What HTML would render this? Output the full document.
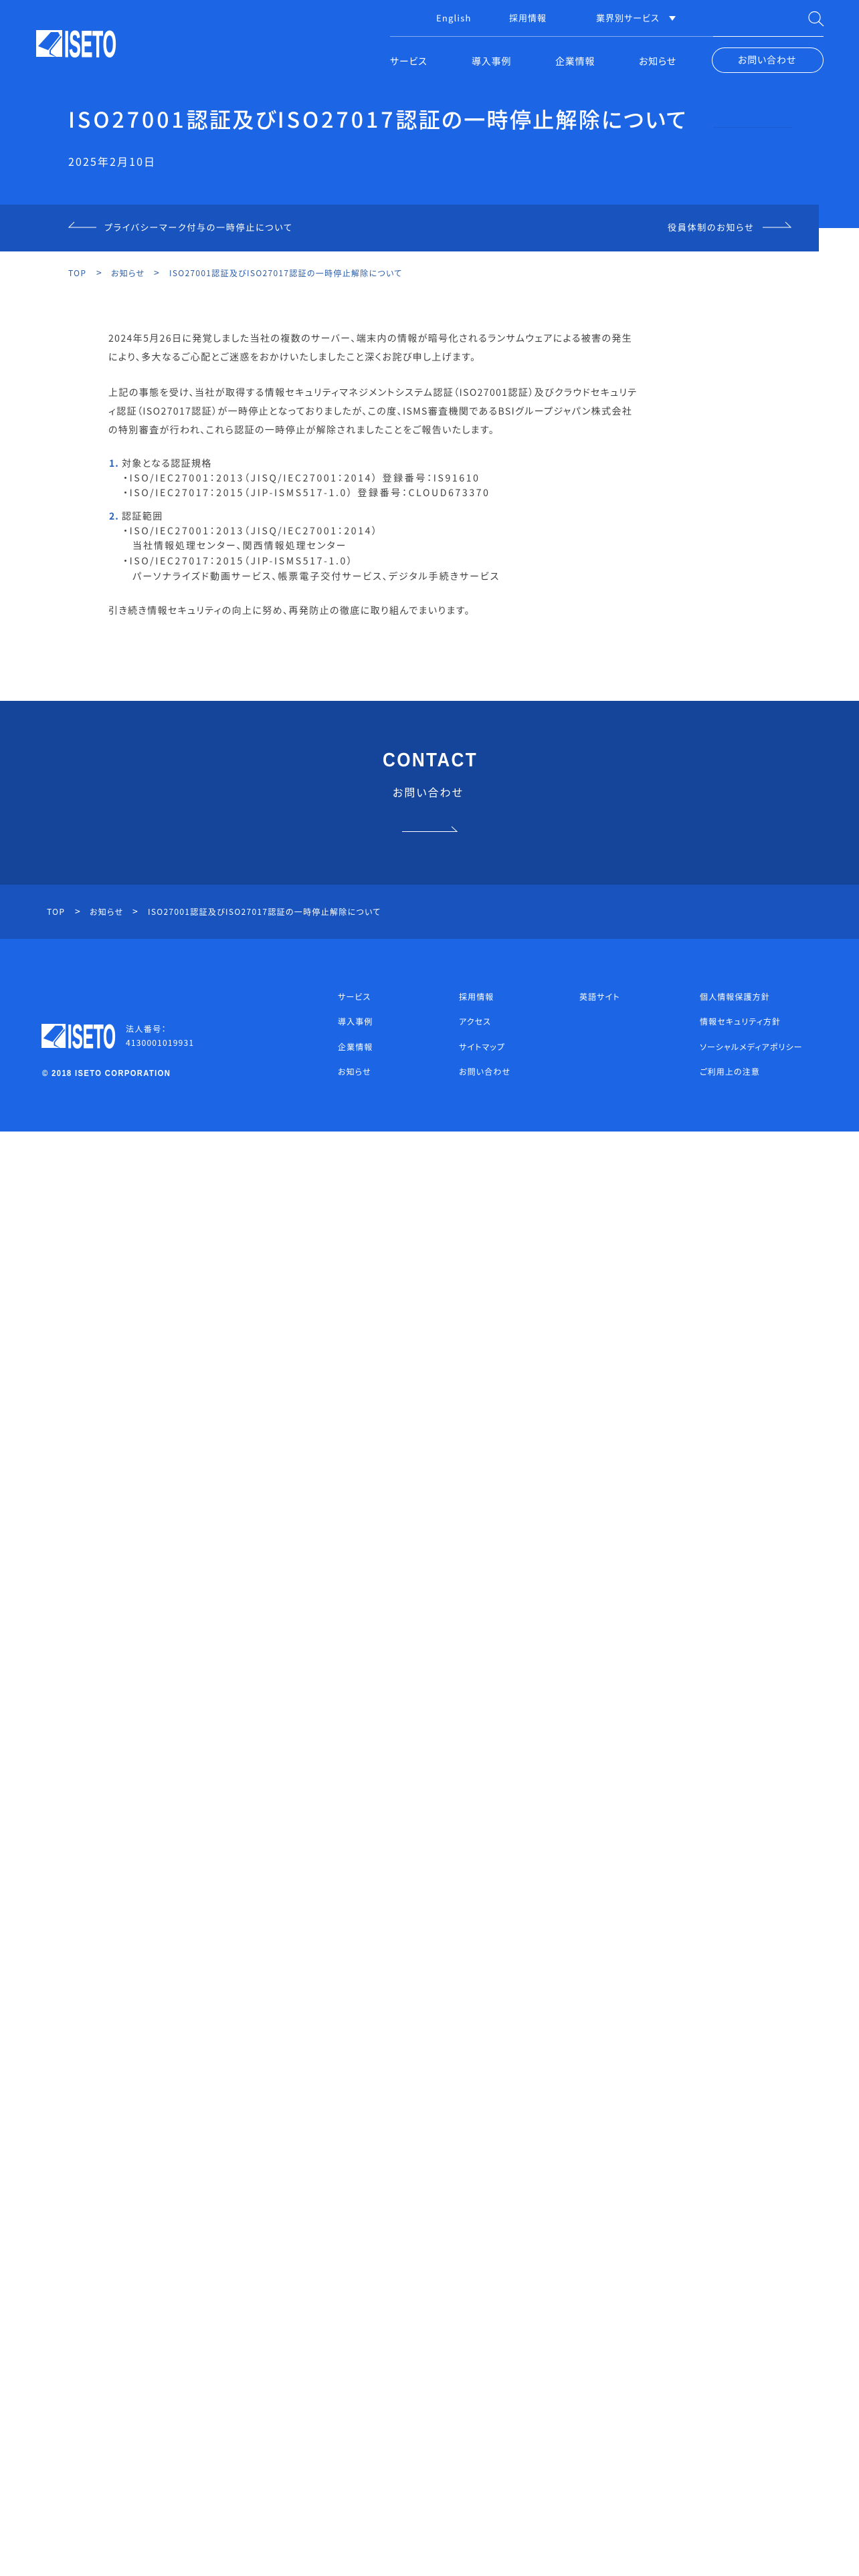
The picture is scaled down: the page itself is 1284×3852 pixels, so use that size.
<!DOCTYPE html>
<html lang="ja">
<head>
<meta charset="utf-8">
<title>ISO27001認証及びISO27017認証の一時停止解除について</title>
<style>
*{margin:0;padding:0;box-sizing:border-box}
html,body{width:1284px;height:3852px;background:#fff;overflow:hidden}
body{position:relative;font-family:"Noto Sans CJK JP","Liberation Sans",sans-serif;font-feature-settings:"palt";color:#fff}
.b{position:absolute}
.t{position:absolute;white-space:nowrap;line-height:20px;height:20px;text-decoration:none;color:inherit}
.n14{font-size:14px;letter-spacing:.8px}
.n13{font-size:13px;letter-spacing:1px}
.l13{font-size:13px;letter-spacing:1.75px}
.bc{font-size:12px;letter-spacing:1.3px}
.gt{font-size:14px;letter-spacing:0}
.f{font-size:12px;letter-spacing:1.1px}
.c{font-size:14px;letter-spacing:1.4px;color:#3f3f3f}
.s{letter-spacing:2.65px}
.m{letter-spacing:2px}
.num{font-size:14px;font-weight:700;letter-spacing:1px;color:#2a63b8}
h1 span{letter-spacing:4px}
svg{position:absolute;overflow:visible}
</style>
</head>
<body>
<header>
<div class="b" style="left:0;top:0;width:1284px;height:341px;background:#1c66e5"></div>
<svg style="left:54px;top:45px" width="120" height="40" viewBox="0 0 120 40">
<rect width="39" height="40" fill="#fff"/>
<path d="M22 3L33 3L35.500 8L18 30L3 24Z" fill="#1c66e5"/>
<path d="M37 8.500L20 30L20 36L29 40L30 40L22 34.500L22 30.500L38 10.500Z" fill="#1c66e5"/>
<text x="42" y="40" font-family="Liberation Sans" font-weight="700" font-size="55.800" textLength="78" lengthAdjust="spacingAndGlyphs" fill="#fff" stroke="#fff" stroke-width="1">ISETO</text>
</svg>
<nav>
<a class="t n13" style="left:652px;top:17px;letter-spacing:1.2px">English</a>
<a class="t n13" style="left:761px;top:17px">採用情報</a>
<a class="t n13" style="left:891px;top:17px">業界別サービス</a>
<svg style="left:1000px;top:24px" width="10" height="7"><path d="M0 0H10L5 7Z" fill="#fff"/></svg>
<svg style="left:1207px;top:16px" width="25" height="24" viewBox="0 0 25 24" fill="none" stroke="#fff" stroke-width="1.200"><circle cx="10.500" cy="10" r="8.500"/><path d="M16.500 16L24 23"/></svg>
<div class="b" style="left:583px;top:54px;width:483px;height:1px;background:rgba(255,255,255,.45)"></div>
<div class="b" style="left:1066px;top:54px;width:165px;height:1px;background:#fff"></div>
<a class="t n14" style="left:583px;top:82px">サービス</a>
<a class="t n14" style="left:705px;top:82px">導入事例</a>
<a class="t n14" style="left:830px;top:82px">企業情報</a>
<a class="t n14" style="left:955px;top:82px">お知らせ</a>
<a class="b" style="left:1064px;top:71px;width:167px;height:38px;border:1px solid #fff;border-radius:19px"></a>
<a class="t n14" style="left:1103px;top:80px">お問い合わせ</a>
</nav>
</header>
<main>
<h1 class="t" style="left:102px;top:153px;height:50px;line-height:50px;font-size:32px;font-weight:500;letter-spacing:2.3px"><span>ISO27001</span>認証及び<span>ISO27017</span>認証の一時停止解除について</h1>
<div class="b" style="left:1066px;top:190px;width:117px;height:1px;background:#1a5ccf"></div>
<p class="t" style="left:102px;top:231px;font-size:16px;letter-spacing:2.100px">2025年2月10日</p>

<div class="b" style="left:0;top:306px;width:1224px;height:70px;background:#1954be"></div>
<svg style="left:102px;top:331px" width="43" height="10" fill="none" stroke="#fff" stroke-width="1"><path d="M42 9H1L9 1"/></svg>
<a class="t l13" style="left:156px;top:330px">プライバシーマーク付与の一時停止について</a>
<a class="t l13" style="left:998px;top:330px">役員体制のお知らせ</a>
<svg style="left:1140px;top:331px" width="43" height="10" fill="none" stroke="#fff" stroke-width="1"><path d="M0 9H42L34 1"/></svg>

<div style="color:#2a5ca8">
<a class="t bc" style="left:102px;top:399px">TOP</a>
<span class="t gt" style="left:144px;top:398px">&gt;</span>
<a class="t bc" style="left:166px;top:399px">お知らせ</a>
<span class="t gt" style="left:230px;top:398px">&gt;</span>
<span class="t bc" style="left:253px;top:399px">ISO27001認証及びISO27017認証の一時停止解除について</span>
</div>

<article>
<p class="t c" style="left:162px;top:496px">2024年5月26日に発覚しました当社の複数のサーバー、端末内の情報が暗号化されるランサムウェアによる被害の発生</p>
<p class="t c" style="left:162px;top:524px">により、多大なるご心配とご迷惑をおかけいたしましたこと深くお詫び申し上げます。</p>
<p class="t c" style="left:162px;top:577px">上記の事態を受け、当社が取得する情報セキュリティマネジメントシステム認証（ISO27001認証）及びクラウドセキュリテ</p>
<p class="t c" style="left:162px;top:605px">ィ認証（ISO27017認証）が一時停止となっておりましたが、この度、ISMS審査機関であるBSIグループジャパン株式会社</p>
<p class="t c" style="left:162px;top:633px">の特別審査が行われ、これら認証の一時停止が解除されましたことをご報告いたします。</p>

<span class="t num" style="left:163px;top:683px">1.</span>
<p class="t c" style="left:182px;top:683px">対象となる認証規格</p>
<p class="t c s" style="left:184px;top:705px">・ISO/IEC27001：2013（JISQ/IEC27001：2014）&nbsp;登録番号：IS91610</p>
<p class="t c s" style="left:184px;top:727px">・ISO/IEC27017：2015（JIP-ISMS517-1.0）&nbsp;登録番号：CLOUD673370</p>
<span class="t num" style="left:163px;top:762px">2.</span>
<p class="t c" style="left:182px;top:762px">認証範囲</p>
<p class="t c s" style="left:184px;top:784px">・ISO/IEC27001：2013（JISQ/IEC27001：2014）</p>
<p class="t c m" style="left:198px;top:806px">当社情報処理センター、関西情報処理センター</p>
<p class="t c s" style="left:184px;top:829px">・ISO/IEC27017：2015（JIP-ISMS517-1.0）</p>
<p class="t c m" style="left:198px;top:852px">パーソナライズド動画サービス、帳票電子交付サービス、デジタル手続きサービス</p>
<p class="t c" style="left:162px;top:903px">引き続き情報セキュリティの向上に努め、再発防止の徹底に取り組んでまいります。</p>
</article>
</main>

<section>
<div class="b" style="left:0;top:1048px;width:1284px;height:275px;background:#14459a"></div>
<div class="t" style="left:572px;top:1117px;height:40px;line-height:40px;font-family:'Liberation Sans',sans-serif;font-weight:700;font-size:29px;letter-spacing:2.600px;transform:scaleX(.9);transform-origin:0 50%">CONTACT</div>
<div class="t" style="left:587px;top:1174px;font-size:16px;letter-spacing:2px">お問い合わせ</div>
<svg style="left:601px;top:1235px" width="83" height="10" fill="none" stroke="#fff" stroke-width="1"><path d="M0 8.500H82L74 1"/></svg>
</section>

<div class="b" style="left:0;top:1323px;width:1284px;height:81px;background:#1954be"></div>
<a class="t bc" style="left:70px;top:1354px">TOP</a>
<span class="t gt" style="left:112px;top:1353px">&gt;</span>
<a class="t bc" style="left:134px;top:1354px">お知らせ</a>
<span class="t gt" style="left:198px;top:1353px">&gt;</span>
<span class="t bc" style="left:221px;top:1354px">ISO27001認証及びISO27017認証の一時停止解除について</span>

<footer>
<div class="b" style="left:0;top:1404px;width:1284px;height:288px;background:#1c66e5"></div>
<svg style="left:62px;top:1531px" width="111" height="36" viewBox="0 0 120 40" preserveAspectRatio="none">
<rect width="39" height="40" fill="#fff"/>
<path d="M22 3L33 3L35.500 8L18 30L3 24Z" fill="#1c66e5"/>
<path d="M37 8.500L20 30L20 36L29 40L30 40L22 34.500L22 30.500L38 10.500Z" fill="#1c66e5"/>
<text x="42" y="40" font-family="Liberation Sans" font-weight="700" font-size="55.800" textLength="78" lengthAdjust="spacingAndGlyphs" fill="#fff" stroke="#fff" stroke-width="1">ISETO</text>
</svg>
<div class="t" style="left:188px;top:1529px;font-size:12px;letter-spacing:1.400px">法人番号：</div>
<div class="t" style="left:188px;top:1550px;font-size:12px;letter-spacing:1.200px">4130001019931</div>
<div class="t" style="left:63px;top:1595px;font-family:'Liberation Sans',sans-serif;font-weight:700;font-size:12.500px;letter-spacing:1.500px;transform:scaleX(.9);transform-origin:0 50%">© 2018 ISETO CORPORATION</div>

<a class="t f" style="left:505px;top:1481px">サービス</a>
<a class="t f" style="left:505px;top:1518px">導入事例</a>
<a class="t f" style="left:505px;top:1556px">企業情報</a>
<a class="t f" style="left:505px;top:1593px">お知らせ</a>

<a class="t f" style="left:686px;top:1481px">採用情報</a>
<a class="t f" style="left:686px;top:1518px">アクセス</a>
<a class="t f" style="left:686px;top:1556px">サイトマップ</a>
<a class="t f" style="left:686px;top:1593px">お問い合わせ</a>

<a class="t f" style="left:866px;top:1481px">英語サイト</a>

<a class="t f" style="left:1046px;top:1481px">個人情報保護方針</a>
<a class="t f" style="left:1046px;top:1518px">情報セキュリティ方針</a>
<a class="t f" style="left:1046px;top:1556px">ソーシャルメディアポリシー</a>
<a class="t f" style="left:1046px;top:1593px">ご利用上の注意</a>
</footer>
</body>
</html>
